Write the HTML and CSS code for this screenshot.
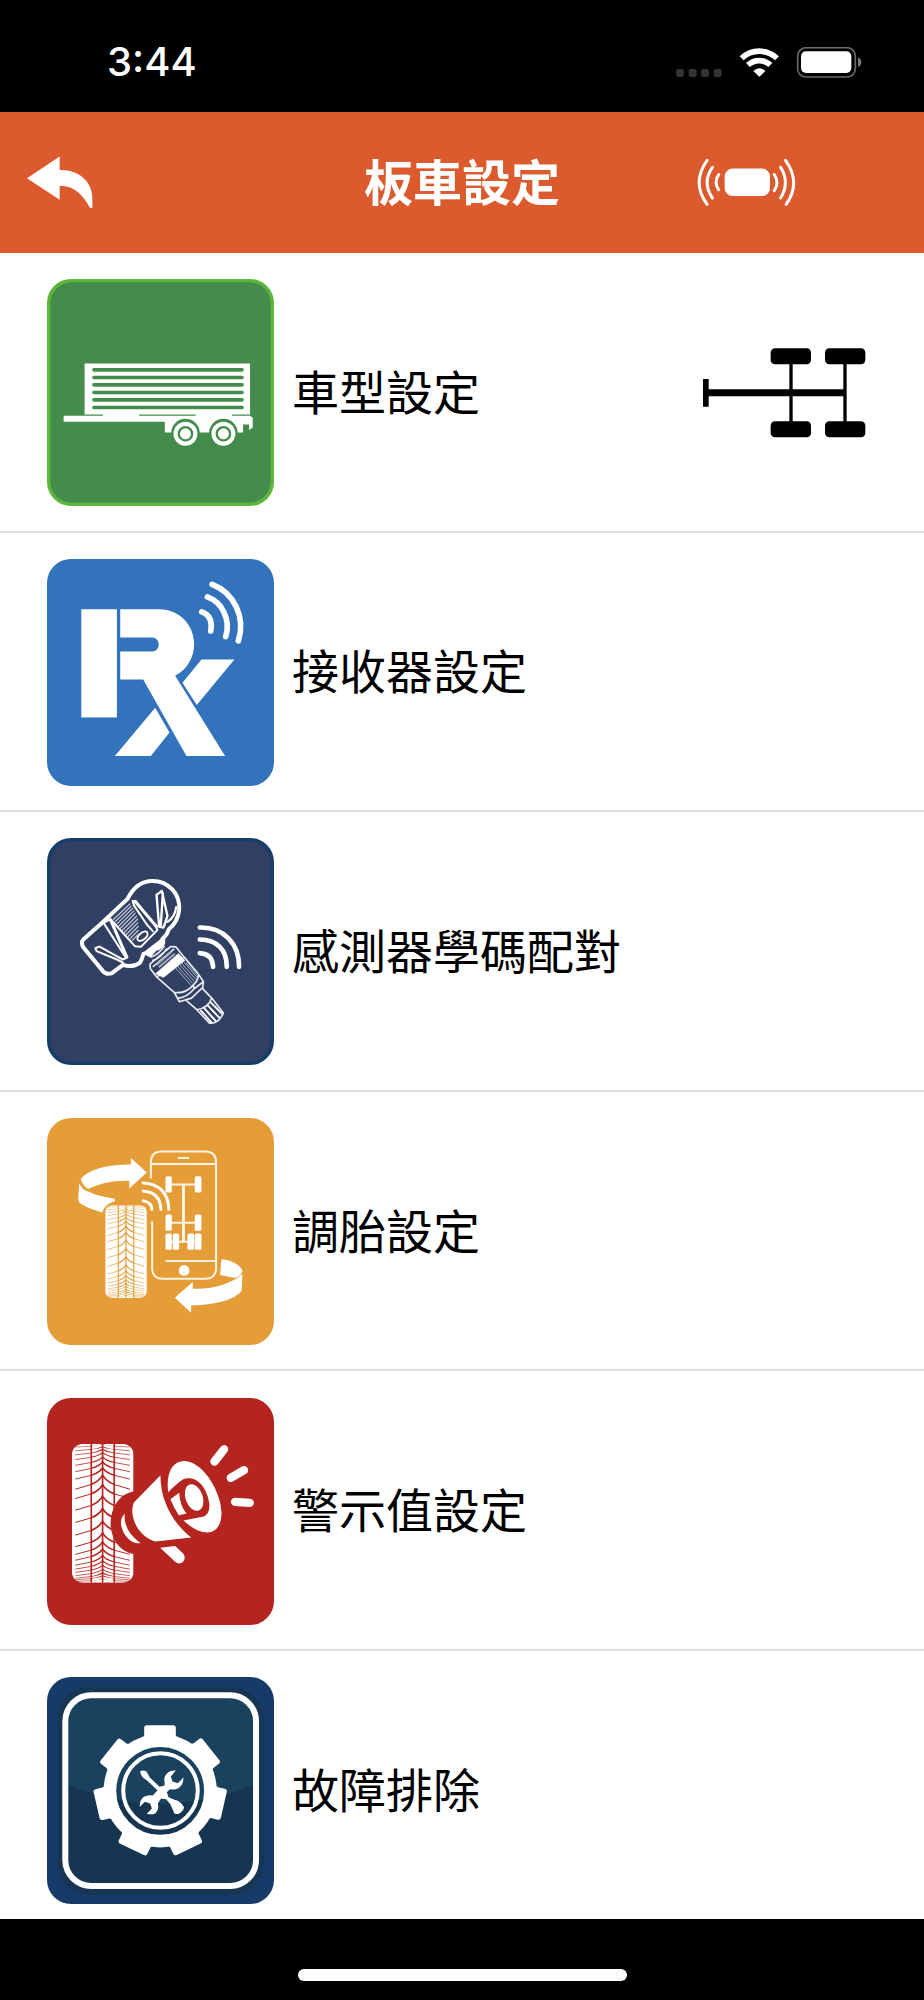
FILE: index.html
```html
<!DOCTYPE html>
<html lang="zh-Hant">
<head>
<meta charset="utf-8">
<meta name="viewport" content="width=device-width, initial-scale=1">
<title>板車設定</title>
<link rel="stylesheet" href="styles.css">
</head>
<body>
<svg class="defs" aria-hidden="true">
  <defs>
    <g id="chevron"><path d="M-82 42L-34 28M35 28L82 42"/><path d="M-34 28Q-10 18 0 0Q10 18 35 28" stroke-width="5"/></g>
    <symbol id="tire" viewBox="95 160 185 417" preserveAspectRatio="none">
      <rect x="95" y="160" width="185" height="417" rx="32" fill="#fff"/>
      <g fill="none" stroke="currentColor" stroke-width="5">
        <path d="M153 160V577M187 160V577M222 160V577"/>
        <g stroke-width="3">
          <use href="#chevron" transform="translate(187 161) scale(1 .2)"/>
          <use href="#chevron" transform="translate(187 168) scale(1 .3)"/>
          <use href="#chevron" transform="translate(187 176) scale(1 .4)"/>
          <use href="#chevron" transform="translate(187 186) scale(1 .5)"/>
          <use href="#chevron" transform="translate(187 199) scale(1 .6)"/>
          <use href="#chevron" transform="translate(187 214) scale(1 .7)"/>
          <use href="#chevron" transform="translate(187 232) scale(1 .8)"/>
          <use href="#chevron" transform="translate(187 254)"/>
          <use href="#chevron" transform="translate(187 282)"/>
          <use href="#chevron" transform="translate(187 317)"/>
          <use href="#chevron" transform="translate(187 354)"/>
          <use href="#chevron" transform="translate(187 392)"/>
          <use href="#chevron" transform="translate(187 427)"/>
          <use href="#chevron" transform="translate(187 454) scale(1 .9)"/>
          <use href="#chevron" transform="translate(187 476) scale(1 .8)"/>
          <use href="#chevron" transform="translate(187 495) scale(1 .7)"/>
          <use href="#chevron" transform="translate(187 511) scale(1 .6)"/>
          <use href="#chevron" transform="translate(187 525) scale(1 .5)"/>
          <use href="#chevron" transform="translate(187 537) scale(1 .45)"/>
          <use href="#chevron" transform="translate(187 547) scale(1 .4)"/>
          <use href="#chevron" transform="translate(187 556) scale(1 .3)"/>
          <use href="#chevron" transform="translate(187 565) scale(1 .2)"/>
        </g>
      </g>
    </symbol>
  </defs>
</svg>

<div class="status">
  <time class="clock">3:44</time>
  <svg class="indicators" viewBox="642 138 558 93" role="img" aria-label="Wi-Fi、電池">
    <g fill="#333"><rect x="642" y="204" width="24" height="24" rx="7"/><rect x="680" y="204" width="24" height="24" rx="7"/><rect x="717" y="204" width="24" height="24" rx="7"/><rect x="755" y="204" width="24" height="24" rx="7"/></g>
    <g fill="none" stroke="#fff" stroke-width="17"><path d="M839 172A76 76 0 0 1 945 172"/><path d="M858 192A49 49 0 0 1 925 192"/></g>
    <path d="M874 210Q892 194 910 210L894 226Q892 228 890 226Z" fill="#fff"/>
    <rect x="1007" y="140" width="173" height="88" rx="25" fill="none" stroke="#6a6a6a" stroke-width="5"/>
    <rect x="1017" y="151" width="151" height="65" rx="15" fill="#fff"/>
    <path d="M1188 169Q1198 174 1198 184Q1198 194 1188 199Z" fill="#777"/>
  </svg>
</div>

<header class="bar">
  <button class="back" type="button" aria-label="返回">
    <svg viewBox="80 470 200 158"><path d="M80 536L179 470V511C242 510 278 550 278 596V626H271C250 588 226 560 179 559V601Z" fill="#fff"/></svg>
  </button>
  <h1 class="title">板車設定</h1>
  <button class="signal" type="button" aria-label="感測器">
    <svg viewBox="705 477 296 142">
      <rect x="787" y="506" width="137" height="83" rx="24" fill="#fff"/>
      <g fill="none" stroke="#fff" stroke-width="9" stroke-linecap="round">
        <path d="M769 524Q753 547 769 570M750 502Q718 548 750 595M734 481Q686 548 734 614"/>
        <path d="M937 524Q953 549 937 573M956 502Q985 548 956 595M971 481Q1019 548 973 614"/>
      </g>
    </svg>
  </button>
</header>

<main class="menu">
  <a class="row" href="#model">
    <svg class="tile" viewBox="20 27 682 682" aria-hidden="true">
      <rect x="20" y="27" width="682" height="682" rx="72" fill="#5cb639"/>
      <rect x="30" y="37" width="662" height="662" rx="64" fill="#448c4c"/>
      <path d="M133 281H630V438L638 444V473L627 481V464H609V488H374V456H70V438H133Z" fill="#fff"/>
      <g fill="none" stroke="#448c4c" stroke-width="11" stroke-linecap="round"><path d="M161 300H606M161 323H606M161 345H606M161 368H606M161 390H606M161 413H606"/></g>
      <path d="M133 436H188M297 436H467M576 436H630" stroke="#448c4c" stroke-width="4"/>
      <g fill="#448c4c"><circle cx="436" cy="490" r="43"/><circle cx="550" cy="490" r="43"/></g>
      <g fill="#fff"><circle cx="436" cy="492" r="36"/><circle cx="550" cy="492" r="36"/></g>
      <g fill="#fff" stroke="#448c4c" stroke-width="7"><circle cx="436" cy="492" r="20"/><circle cx="550" cy="492" r="20"/></g>
    </svg>
    <span class="label">車型設定</span>
    <svg class="axles" viewBox="69 53 489 270" role="img" aria-label="雙軸板車">
      <path d="M69 146H86V177H490V101H500V274H490V198H86V229H69ZM328 101H338V274H328Z"/>
      <rect x="272" y="54" width="121" height="48" rx="13"/><rect x="435" y="54" width="121" height="48" rx="13"/>
      <rect x="272" y="273" width="121" height="48" rx="13"/><rect x="435" y="273" width="121" height="48" rx="13"/>
    </svg>
  </a>

  <a class="row" href="#receiver">
    <svg class="tile" viewBox="20 25 682 682" aria-hidden="true">
      <rect x="20" y="25" width="682" height="682" rx="72" fill="#3273bb"/>
      <g fill="#fff">
        <rect x="123" y="176" width="107" height="325"/>
        <path d="M240 176H358C420 176 462 226 462 280C462 322 440 357 405 376L555 617H439L309 387H240V303H335C363 303 363 261 335 261H240Z"/>
        <path d="M484 327H583L470 464L427 397ZM345 472L388 546L332 617H224Z"/>
      </g>
      <g fill="none" stroke="#fff" stroke-width="17" stroke-linecap="round"><path d="M485 184Q520 197 512 241M502 139C545 155 573 205 557 258M516 101C580 125 618 199 595 271"/></g>
    </svg>
    <span class="label">接收器設定</span>
  </a>

  <a class="row" href="#pairing">
    <svg class="tile" viewBox="20 24 682 682" aria-hidden="true">
      <rect x="20" y="24" width="682" height="682" rx="72" fill="#173d69"/>
      <rect x="30" y="34" width="662" height="662" rx="64" fill="#303f62"/>
      <g fill="none" stroke="#fff" stroke-linejoin="round" stroke-linecap="round">
        <path d="M184 280L262 207C280 170 304 153 337 153C385 153 421 192 417 241C414 268 402 285 386 298C382 315 372 321 366 328M184 280L129 329Q121 339 129 352L188 424Q199 436 215 430L248 405C270 413 286 408 299 399Q305 390 310 372" stroke-width="12"/>
        <path d="M190 279L211 268L284 349L302 351L352 300L346 289L286 213L277 213L282 228L320 284L338 304M190 279L258 385L247 389L178 350L165 355L169 364L230 389L248 398" stroke-width="6"/>
        <path d="M211 270L260 382M284 214L349 290" stroke-width="9"/>
        <path d="M349 195L365 183L382 258L370 293L357 290ZM368 190L362 286M382 276Q405 262 408 232" stroke-width="7"/>
        <ellipse cx="307" cy="319" rx="18" ry="10" transform="rotate(-40 307 319)" stroke-width="6"/>
        <path d="M220 268L269 222M225 275L273 229M230 282L277 236M235 289L281 243M240 296L285 250M246 302L289 259M252 308L292 268M258 314L293 279M264 320L294 290M270 326L294 302M276 332L294 314" stroke-width="4" stroke="#bcc3d0"/>
      </g>
      <path d="M306 370L375 317V341Q368 360 348 363L331 384Z" fill="#fff"/>
      <g fill="none" stroke="#e8ebf0" stroke-width="5" stroke-linejoin="round">
        <path d="M332 382Q356 374 373 348M336 393Q363 384 380 356M330 402L392 350L407 351L432 382L350 442L330 416ZM338 411L402 357"/>
        <path d="M432 382L475 433L490 456L488 473L454 505L418 516L402 488L350 442M402 488Q436 493 459 466Q474 453 475 433M413 506Q442 502 462 477L490 456M459 466L462 477M402 488L413 506"/>
        <path d="M438 512L470 540L508 580Q534 584 550 550L515 505L486 475M470 540Q505 535 515 505"/>
      </g>
      <path d="M345 432L415 370L435 392L370 444Z" fill="#fff"/>
      <path d="M350 405L394 366M356 412L404 372" stroke="#a5aebe" stroke-width="6"/>
      <path d="M405 413L452 466M411 408L457 460M417 403L462 454M424 400L467 449M431 397L471 443M437 398L473 438" stroke="#aab2c2" stroke-width="3"/>
      <path d="M481 541L515 579M492 535L528 575M502 526L539 565M511 517L546 552" stroke="#fff" stroke-width="6"/>
      <g fill="none" stroke="#fff" stroke-width="14" stroke-linecap="round"><path d="M479 370Q517 372 519 411M479 329C530 329 561 360 560 411M479 293C551 291 598 342 597 411"/></g>
    </svg>
    <span class="label">感測器學碼配對</span>
  </a>

  <a class="row" href="#rotation">
    <svg class="tile tile-amber" viewBox="20 22 682 682" aria-hidden="true">
      <rect x="20" y="22" width="682" height="682" rx="72" fill="#e59d38"/>
      <g fill="none" stroke="#fff4e0" stroke-width="6">
        <path d="M332 204V156Q332 123 365 123H495Q528 123 528 156V472Q528 505 495 505H367Q336 505 336 472V332M332 160H528M376 452H528M413 142H447"/>
        <path d="M385 222H474M385 337H474M385 394H474"/><path d="M430 222V394" stroke-width="9"/>
      </g>
      <g fill="#fff">
        <rect x="376" y="197" width="19" height="49" rx="5"/><rect x="464" y="197" width="20" height="49" rx="5"/>
        <rect x="376" y="312" width="19" height="49" rx="5"/><rect x="464" y="312" width="20" height="49" rx="5"/>
        <rect x="376" y="369" width="19" height="49" rx="5"/><rect x="398" y="369" width="19" height="49" rx="5"/>
        <rect x="442" y="369" width="20" height="49" rx="5"/><rect x="464" y="369" width="20" height="49" rx="5"/>
        <circle cx="432" cy="480" r="16"/>
        <path d="M121 207C142 178 197 162 272 162V142L320 186L267 234V211C222 209 180 218 144 235Q133 232 121 207Z"/>
        <path d="M117 217Q126 239 144 243C169 255 194 261 222 264L225 272C203 277 191 289 186 306C160 298 130 288 117 276Q114 272 114 264Z"/>
        <path d="M544 446C577 449 603 465 607 481Q604 497 586 503L540 494Z"/>
        <path d="M607 491L605 541C584 569 522 584 453 585V607L404 562L458 515V535C517 538 576 520 607 491Z"/>
      </g>
      <g fill="none" stroke="#fff" stroke-width="9" stroke-linecap="round"><path d="M309 271Q335 275 335 297M309 241Q361 245 362 297M309 217C356 219 386 248 386 297"/></g>
      <use href="#tire" x="195" y="284" width="125" height="279"/>
    </svg>
    <span class="label">調胎設定</span>
  </a>

  <a class="row" href="#alerts">
    <svg class="tile tile-red" viewBox="20 22 682 682" aria-hidden="true">
      <rect x="20" y="22" width="682" height="682" rx="72" fill="#b4251f"/>
      <use href="#tire" x="95" y="160" width="185" height="417"/>
      <path d="M281 303C235 310 212 354 211 397C211 447 241 485 281 491L330 460V330Z" fill="#b4251f"/>
      <g fill="#fff">
        <path d="M254 370C249 402 268 434 301 458C274 463 246 434 242 399Q242 380 254 370Z"/>
        <path d="M361 254C360 323 392 393 453 441L346 453C298 441 263 381 281 336Z"/>
        <path d="M384 305C376 239 403 207 439 212C495 219 548 315 544 374C540 435 490 445 430 390L487 379Q509 373 508 342C502 290 470 256 437 264Q423 266 384 305Z"/>
        <ellipse cx="462" cy="321" rx="26" ry="41" transform="rotate(-19 462 321)"/>
        <path d="M391 326L417 307Q420 348 439 369L416 374Q400 351 391 326Z"/>
        <path d="M360 472L405 467L429 489Q438 502 429 514Q417 524 405 514Z"/>
      </g>
      <path d="M523 213L552 176M572 262L612 239M585 334L629 337" fill="none" stroke="#fff" stroke-width="25" stroke-linecap="round"/>
    </svg>
    <span class="label">警示值設定</span>
  </a>

  <a class="row" href="#troubleshooting">
    <svg class="tile" viewBox="20 20 682 682" aria-hidden="true">
      <rect x="20" y="20" width="682" height="682" rx="72" fill="#173b68"/>
      <rect x="50" y="50" width="622" height="624" rx="98" fill="#163653"/>
      <rect x="75" y="75" width="573" height="573" rx="78" fill="#153551"/>
      <path d="M84 345V155Q84 84 155 84H568Q639 84 639 155V345Q500 400 361 400Q222 400 84 345Z" fill="#1a415e"/>
      <rect x="75" y="75" width="573" height="573" rx="78" fill="none" stroke="#fff" stroke-width="18"/>
      <circle cx="360" cy="362" r="151" fill="none" stroke="#fff" stroke-width="38"/>
      <g fill="#fff">
        <path id="tooth" d="M306 208L312 194V173Q312 165 320 165H399Q407 165 407 173V194L414 208Z"/>
        <use href="#tooth" transform="rotate(51.43 360 361)"/>
        <use href="#tooth" transform="rotate(102.86 360 361)"/>
        <use href="#tooth" transform="rotate(154.29 360 361)"/>
        <use href="#tooth" transform="rotate(205.71 360 361)"/>
        <use href="#tooth" transform="rotate(257.14 360 361)"/>
        <use href="#tooth" transform="rotate(308.57 360 361)"/>
      </g>
      <circle cx="361" cy="361" r="112" fill="none" stroke="#fff" stroke-width="12"/>
      <path d="M300 303Q309 299 319 304L329 322L358 350L372 347C376 340 370 330 374 319Q383 299 407 301L392 319L397 334L413 339L430 322Q431 344 415 354Q403 360 389 357L380 366L385 381L403 389Q420 392 431 410Q433 419 421 428Q412 434 403 430L391 403L378 387L363 385L353 399Q358 418 346 429Q335 435 320 431L335 415L330 400L314 395L299 410Q297 391 311 380Q324 373 338 376L352 360L318 329Q301 320 300 303Z" fill="#fff"/>
    </svg>
    <span class="label">故障排除</span>
  </a>
</main>

<footer class="home"><span class="home-indicator"></span></footer>
</body>
</html>
```
FILE: styles.css
```css
* { box-sizing: border-box; }

body {
  margin: 0;
  min-height: 100vh;
  display: flex;
  flex-direction: column;
  background: #fff;
  color: #000;
  font-family: "Noto Sans CJK TC", "Noto Sans", sans-serif;
}

svg { display: block; }

.defs {
  position: absolute;
  width: 0;
  height: 0;
}

.status {
  display: flex;
  align-items: center;
  justify-content: space-between;
  height: 112px;
  padding: 12px 62px 0 107px;
  background: #000;
  color: #fff;
}

.clock {
  font-family: Inter, "Liberation Sans", sans-serif;
  font-size: 40px;
  font-weight: 500;
  line-height: 48px;
}

.indicators {
  width: 186px;
  height: 31px;
}

.bar {
  display: grid;
  grid-template-columns: 1fr auto 1fr;
  align-items: center;
  height: 141px;
  background: #dc5b2e;
  color: #fff;
}

.back,
.signal {
  padding: 0;
  border: 0;
  background: none;
  cursor: pointer;
}

.back {
  justify-self: start;
  margin-left: 27px;
}

.back svg {
  width: 66px;
  height: 53px;
}

.title {
  margin: 0;
  padding-bottom: 6px;
  font-size: 49px;
  font-weight: 700;
  line-height: 72px;
}

.signal {
  justify-self: end;
  margin-right: 128px;
}

.signal svg {
  width: 99px;
  height: 47px;
}

.menu {
  flex: 1;
  display: grid;
  grid-template-rows: repeat(5, 1fr) auto;
}

.row {
  display: flex;
  align-items: center;
  gap: 18px;
  padding: 26px 58px 24px 47px;
  border-bottom: 2px solid #dedede;
  color: inherit;
  text-decoration: none;
}

.row:last-child {
  padding-bottom: 15px;
  border-bottom: 0;
}

.tile {
  flex: none;
  width: 227px;
  height: 227px;
}

.tile-amber { color: #e59d38; }
.tile-red { color: #b4251f; }

.label {
  padding-bottom: 6px;
  font-size: 47px;
  font-weight: 400;
  line-height: 68px;
}

.axles {
  width: 163px;
  height: 90px;
  margin-left: auto;
}

.home {
  display: flex;
  align-items: flex-end;
  justify-content: center;
  height: 81px;
  padding-bottom: 19px;
  background: #000;
}

.home-indicator {
  width: 329px;
  max-width: 60%;
  height: 12px;
  border-radius: 6px;
  background: #fff;
}
```
